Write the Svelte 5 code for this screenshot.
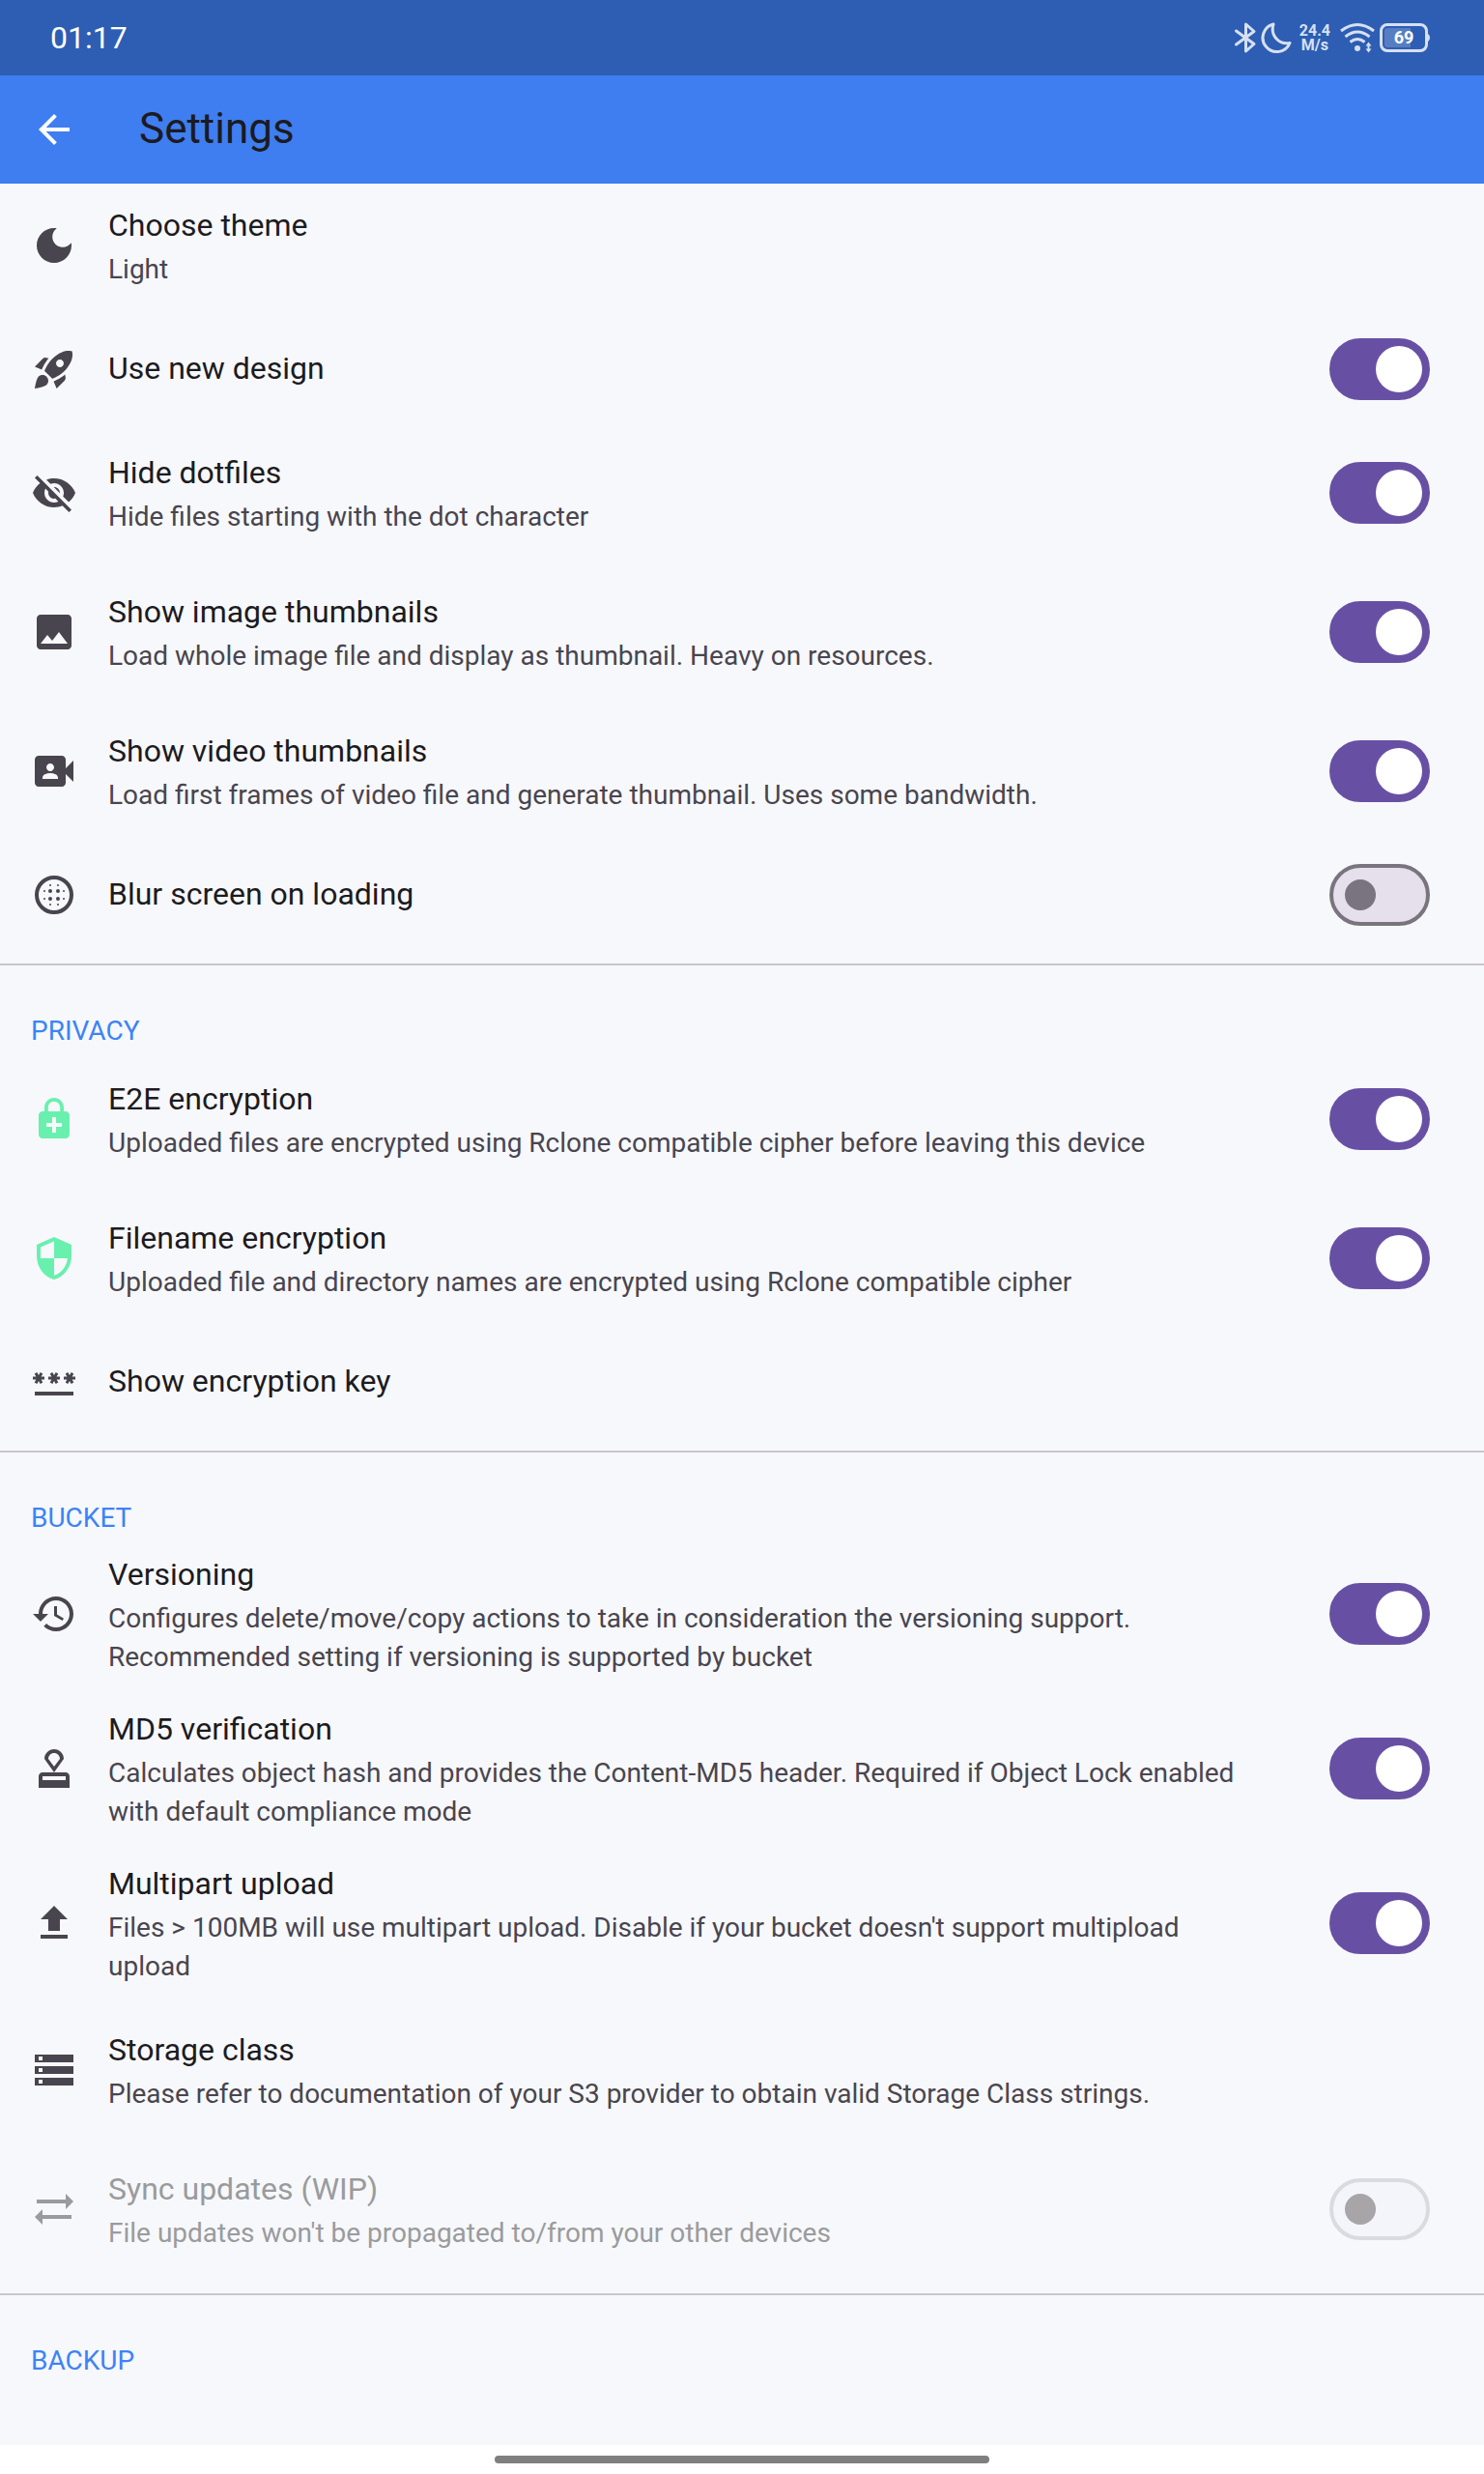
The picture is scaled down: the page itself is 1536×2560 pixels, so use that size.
<script>
  const icons = {
    theme: 'M12 3c-4.97 0-9 4.03-9 9s4.03 9 9 9 9-4.03 9-9c0-.46-.04-.92-.1-1.36-.98 1.37-2.58 2.26-4.4 2.26-2.98 0-5.4-2.42-5.4-5.4 0-1.81.89-3.42 2.26-4.4-.44-.06-.9-.1-1.36-.1z',
    rocket: 'M9.19 6.35c-2.04 2.29-3.44 5.58-3.57 5.89L2 10.69l4.05-4.05c.47-.47 1.15-.68 1.81-.55l1.33.26zM11.17 17s3.74-1.55 5.89-3.7c5.4-5.4 4.5-9.62 4.21-10.57-.95-.3-5.17-1.19-10.57 4.21C8.55 9.09 7 12.83 7 12.83L11.17 17zm6.48-2.19c-2.29 2.04-5.58 3.44-5.89 3.57L13.31 22l4.05-4.05c.47-.47.68-1.15.55-1.81l-.26-1.33zM9 18c0 .83-.34 1.58-.88 2.12C6.94 21.3 2 22 2 22s.7-4.94 1.88-6.12C4.42 15.34 5.17 15 6 15c1.66 0 3 1.34 3 3zm4-9c0-1.1.9-2 2-2s2 .9 2 2-.9 2-2 2-2-.9-2-2z',
    hidden: 'M12 7c2.76 0 5 2.24 5 5 0 .65-.13 1.26-.36 1.83l2.92 2.92c1.51-1.26 2.7-2.89 3.43-4.75-1.73-4.39-6-7.5-11-7.5-1.4 0-2.74.25-3.98.7l2.16 2.16C10.74 7.13 11.35 7 12 7zM2 4.27l2.28 2.28.46.46C3.08 8.3 1.78 10.02 1 12c1.73 4.39 6 7.5 11 7.5 1.55 0 3.03-.3 4.38-.84l.42.42L19.73 22 21 20.73 3.27 3 2 4.27zM7.53 9.8l1.55 1.55c-.05.21-.08.43-.08.65 0 1.66 1.34 3 3 3 .22 0 .44-.03.65-.08l1.55 1.55c-.67.33-1.41.53-2.2.53-2.76 0-5-2.24-5-5 0-.79.2-1.53.53-2.2zm4.31-.78l3.15 3.15.02-.16c0-1.66-1.34-3-3-3l-.17.01z',
    image: 'M21 19V5c0-1.1-.9-2-2-2H5c-1.1 0-2 .9-2 2v14c0 1.1.9 2 2 2h14c1.1 0 2-.9 2-2zM8.5 13.5l2.51 3.01L14.5 12l4.5 6H5l3.5-4.5z',
    video: 'M18 10.48V6c0-1.1-.9-2-2-2H4c-1.1 0-2 .9-2 2v12c0 1.1.9 2 2 2h12c1.1 0 2-.9 2-2v-4.48l4 3.98v-11l-4 3.98zM10 8c1.1 0 2 .9 2 2s-.9 2-2 2-2-.9-2-2 .9-2 2-2zm4 8H6v-.57c0-.81.48-1.53 1.22-1.85.85-.37 1.79-.58 2.78-.58s1.93.21 2.78.58c.74.32 1.22 1.04 1.22 1.85V16z',
    lock: 'M18 8h-1V6c0-2.76-2.24-5-5-5S7 3.24 7 6v2H6c-1.1 0-2 .9-2 2v10c0 1.1.9 2 2 2h12c1.1 0 2-.9 2-2V10c0-1.1-.9-2-2-2zM8.9 6c0-1.71 1.39-3.1 3.1-3.1s3.1 1.39 3.1 3.1v2H8.9V6zM16 16h-3v3h-2v-3H8v-2h3v-3h2v3h3v2z',
    shield: 'M12 1L3 5v6c0 5.55 3.84 10.74 9 12 5.16-1.26 9-6.45 9-12V5l-9-4zm0 10.99h7c-.53 4.12-3.28 7.79-7 8.94V12H5V6.3l7-3.11v8.8z',
    key: 'M2 17h20v2H2v-2zm1.15-4.05L4 11.47l.85 1.48 1.3-.75-.85-1.48H7v-1.5H5.3l.85-1.47L4.85 7 4 8.47 3.15 7l-1.3.75.85 1.47H1v1.5h1.7l-.85 1.48 1.3.75zm6.7-.75l1.3.75.85-1.48.85 1.48 1.3-.75-.85-1.48H15v-1.5h-1.7l.85-1.47-1.3-.75L12 8.47 11.15 7l-1.3.75.85 1.47H9v1.5h1.7l-.85 1.48zM23 9.22h-1.7l.85-1.47-1.3-.75L20 8.47 19.15 7l-1.3.75.85 1.47H17v1.5h1.7l-.85 1.48 1.3.75.85-1.48.85 1.48 1.3-.75-.85-1.48H23v-1.5z',
    history: 'M13 3c-4.97 0-9 4.03-9 9H1l3.89 3.89.07.14L9 12H6c0-3.87 3.13-7 7-7s7 3.13 7 7-3.13 7-7 7c-1.93 0-3.68-.79-4.94-2.06l-1.42 1.42C8.27 19.99 10.51 21 13 21c4.97 0 9-4.03 9-9s-4.03-9-9-9zm-1 5v5l4.28 2.54.72-1.21-3.5-2.08V8H12z',
    stamp: 'M4 16v6h16v-6c0-1.1-.9-2-2-2H6c-1.1 0-2 .9-2 2zm14 2H6v-2h12v2zM12 2C9.24 2 7 4.24 7 7l5 7 5-7c0-2.76-2.24-5-5-5zm0 9L9 7c0-1.66 1.34-3 3-3s3 1.34 3 3l-3 4z',
    upload: 'M5 20h14v-2H5v2zm0-10h4v6h6v-6h4l-7-7-7 7z',
    storage: 'M2 20h20v-4H2v4zm2-3h2v2H4v-2zM2 4v4h20V4H2zm4 3H4V5h2v2zm-4 7h20v-4H2v4zm2-3h2v2H4v-2z',
    sync: 'M22 8l-4-4v3H3v2h15v3l4-4zM2 16l4 4v-3h15v-2H6v-3l-4 4z'
  };

  const blurDots = [
    [10, 10, 1], [14, 10, 1], [10, 14, 1], [14, 14, 1],
    [7, 10, 0.5], [7, 14, 0.5], [17, 10, 0.5], [17, 14, 0.5],
    [10, 7, 0.5], [14, 7, 0.5], [10, 17, 0.5], [14, 17, 0.5]
  ];

  let sections = $state([
    {
      heading: '',
      items: [
        { id: 'theme', icon: 'theme', title: 'Choose theme', detail: 'Light' },
        { id: 'design', icon: 'rocket', title: 'Use new design', on: true },
        { id: 'dotfiles', icon: 'hidden', title: 'Hide dotfiles', detail: 'Hide files starting with the dot character', on: true },
        { id: 'images', icon: 'image', title: 'Show image thumbnails', detail: 'Load whole image file and display as thumbnail. Heavy on resources.', on: true },
        { id: 'videos', icon: 'video', title: 'Show video thumbnails', detail: 'Load first frames of video file and generate thumbnail. Uses some bandwidth.', on: true },
        { id: 'blur', icon: 'blur', title: 'Blur screen on loading', on: false }
      ]
    },
    {
      heading: 'PRIVACY',
      items: [
        { id: 'e2e', icon: 'lock', secure: true, title: 'E2E encryption', detail: 'Uploaded files are encrypted using Rclone compatible cipher before leaving this device', on: true },
        { id: 'filenames', icon: 'shield', secure: true, title: 'Filename encryption', detail: 'Uploaded file and directory names are encrypted using Rclone compatible cipher', on: true },
        { id: 'key', icon: 'key', title: 'Show encryption key' }
      ]
    },
    {
      heading: 'BUCKET',
      items: [
        { id: 'versioning', icon: 'history', tall: true, title: 'Versioning', detail: 'Configures delete/move/copy actions to take in consideration the versioning support. Recommended setting if versioning is supported by bucket', on: true },
        { id: 'md5', icon: 'stamp', tall: true, title: 'MD5 verification', detail: 'Calculates object hash and provides the Content-MD5 header. Required if Object Lock enabled with default compliance mode', on: true },
        { id: 'multipart', icon: 'upload', tall: true, title: 'Multipart upload', detail: "Files > 100MB will use multipart upload. Disable if your bucket doesn't support multipload upload", on: true },
        { id: 'storage', icon: 'storage', title: 'Storage class', detail: 'Please refer to documentation of your S3 provider to obtain valid Storage Class strings.' },
        { id: 'sync', icon: 'sync', disabled: true, title: 'Sync updates (WIP)', detail: "File updates won't be propagated to/from your other devices", on: false }
      ]
    },
    { heading: 'BACKUP', items: [] }
  ]);
</script>

{#snippet content(item)}
  <svg class="icon" class:secure={item.secure} viewBox="0 0 24 24" aria-hidden="true">
    {#if item.icon === 'blur'}
      <circle cx="12" cy="12" r="9" fill="none" stroke="currentColor" stroke-width="2" />
      {#each blurDots as [cx, cy, r]}
        <circle {cx} {cy} {r} />
      {/each}
    {:else}
      <path fill-rule="evenodd" d={icons[item.icon]} />
    {/if}
  </svg>
  <span class="text">
    <span class="title">{item.title}</span>
    {#if item.detail}<span class="detail">{item.detail}</span>{/if}
  </span>
{/snippet}

<div class="screen">
  <div class="status">
    <time>01:17</time>
    <div class="indicators">
      <svg width="24" height="34" viewBox="0 0 24 34" fill="none" stroke="currentColor" stroke-width="3" stroke-linejoin="round" stroke-linecap="round" aria-hidden="true">
        <path d="M2.500 10 L21 23.500 L12.500 31 V3 L21 10.500 L2.500 24" />
      </svg>
      <svg class="moon" width="32" height="34" viewBox="0 0 32 34" fill="none" stroke="currentColor" stroke-width="3" stroke-linejoin="round" aria-hidden="true">
        <path d="M13 3 A14.500 14.500 0 1 0 30 22.500 C19 24.500 9.500 15 13 3Z" />
      </svg>
      <span class="speed">24.4<br />M/s</span>
      <svg class="wifi" width="36" height="32" viewBox="0 0 36 32" fill="none" stroke="currentColor" stroke-width="3" aria-hidden="true">
        <path d="M1 9 Q18 -4 35 9 M5.500 15 Q18 5 30.500 15 M10.500 20.500 Q18 14.500 25.500 20.500" />
        <circle cx="18" cy="27" r="3" fill="currentColor" stroke="none" />
        <path d="M29.500 20.500 l3 4 h-2 v3 h2 l-3 4 -3-4 h2 v-3 h-2z" fill="currentColor" stroke="none" />
      </svg>
      <span class="battery"><span class="charge">69</span></span>
    </div>
  </div>

  <header>
    <button class="back" aria-label="Back">
      <svg class="icon" viewBox="0 0 24 24" aria-hidden="true">
        <path d="M20 11H7.83l5.59-5.59L12 4l-8 8 8 8 1.410-1.410L7.830 13H20v-2z" />
      </svg>
    </button>
    <h1>Settings</h1>
  </header>

  <main>
    {#each sections as section}
      <section>
        {#if section.heading}<h2>{section.heading}</h2>{/if}
        {#each section.items as item (item.id)}
          {#if item.on === undefined}
            <button class="row" class:double={item.detail}>
              {@render content(item)}
            </button>
          {:else}
            <label class="row" class:double={item.detail} class:tall={item.tall} class:disabled={item.disabled}>
              {@render content(item)}
              <input type="checkbox" role="switch" bind:checked={item.on} disabled={item.disabled} />
            </label>
          {/if}
        {/each}
      </section>
    {/each}
  </main>

  <footer><span class="handle"></span></footer>
</div>

<style>
  :global(body) {
    margin: 0;
    background: #f7f8fb;
  }

  .screen {
    min-height: 100vh;
    display: flex;
    flex-direction: column;
    background: #f7f8fb;
    color: #1c1b1f;
    font-family: Roboto, 'Liberation Sans', sans-serif;
  }

  .status {
    height: 78px;
    padding: 0 56px 0 52px;
    display: flex;
    align-items: center;
    justify-content: space-between;
    background: #2d5eb3;
    color: #fff;
    font-size: 32px;
  }

  .indicators {
    display: flex;
    align-items: center;
    color: #d7e0f2;
  }

  .moon {
    margin-left: 4px;
  }

  .speed {
    margin-left: 8px;
    font-size: 16px;
    line-height: 15px;
    font-weight: 700;
    text-align: center;
  }

  .wifi {
    margin-left: 10px;
  }

  .battery {
    position: relative;
    box-sizing: border-box;
    width: 50px;
    height: 30px;
    margin: 0 2px 0 5px;
    padding: 2px;
    display: flex;
    border: 3px solid currentColor;
    border-radius: 8px;
  }

  .battery::after {
    content: '';
    position: absolute;
    left: 100%;
    top: 7px;
    width: 5px;
    height: 10px;
    border-radius: 0 5px 5px 0;
    background: currentColor;
  }

  .charge {
    flex: 1;
    border-radius: 3px;
    background: linear-gradient(90deg, #577ec2 68%, transparent 68%);
    color: #fff;
    font-size: 18px;
    line-height: 20px;
    font-weight: 700;
    text-align: center;
  }

  header {
    height: 112px;
    padding: 0 32px;
    display: flex;
    align-items: center;
    gap: 64px;
    background: #3f7ef0;
  }

  button {
    border: 0;
    background: none;
    color: inherit;
    font: inherit;
    text-align: left;
  }

  .back {
    padding: 0;
    display: flex;
    color: #fff;
  }

  h1 {
    margin: 0;
    padding-bottom: 2px;
    font-size: 44px;
    line-height: 56px;
    font-weight: 400;
  }

  main {
    flex: 1;
    margin-top: -8px;
  }

  section + section::before {
    content: '';
    display: block;
    height: 2px;
    margin: 15px 0;
    background: #cac4d0;
  }

  h2 {
    margin: 0;
    padding: 34px 32px 0;
    color: #3d83f7;
    font-size: 28px;
    line-height: 38px;
    font-weight: 400;
  }

  .row {
    box-sizing: border-box;
    width: 100%;
    min-height: 112px;
    padding: 12px 56px 12px 32px;
    display: flex;
    align-items: center;
    gap: 32px;
  }

  .double {
    min-height: 144px;
  }

  .tall {
    min-height: 160px;
  }

  .icon {
    width: 48px;
    height: 48px;
    flex: none;
    fill: currentColor;
  }

  .row .icon {
    color: #49454f;
  }

  .row .secure {
    color: #69f0ae;
  }

  .text {
    flex: 1;
    min-width: 0;
    display: flex;
    flex-direction: column;
  }

  .title {
    padding-bottom: 2px;
    font-size: 32px;
    line-height: 46px;
  }

  .detail {
    padding-top: 1px;
    color: #49454f;
    font-size: 28px;
    line-height: 40px;
  }

  .disabled,
  .disabled .detail,
  .disabled .icon {
    color: #9a9b9d;
  }

  input {
    appearance: none;
    box-sizing: border-box;
    flex: none;
    width: 104px;
    height: 64px;
    margin: 0 0 0 40px;
    padding: 0 12px;
    display: flex;
    align-items: center;
    border: 4px solid #79747e;
    border-radius: 32px;
    background: #e6e0ec;
  }

  input::before {
    content: '';
    width: 32px;
    height: 32px;
    border-radius: 50%;
    background: #79747e;
  }

  input:checked {
    padding: 0 4px;
    justify-content: flex-end;
    border-color: #6750a4;
    background: #6750a4;
  }

  input:checked::before {
    width: 48px;
    height: 48px;
    background: #fff;
  }

  input:disabled {
    border-color: #dadbe0;
    background: #f4f5fa;
  }

  input:disabled::before {
    background: #a7a5a8;
  }

  footer {
    height: 30px;
    display: flex;
    align-items: center;
    justify-content: center;
    background: #fff;
  }

  .handle {
    width: 33.333%;
    height: 8px;
    border-radius: 4px;
    background: #7f7f7f;
  }
</style>
